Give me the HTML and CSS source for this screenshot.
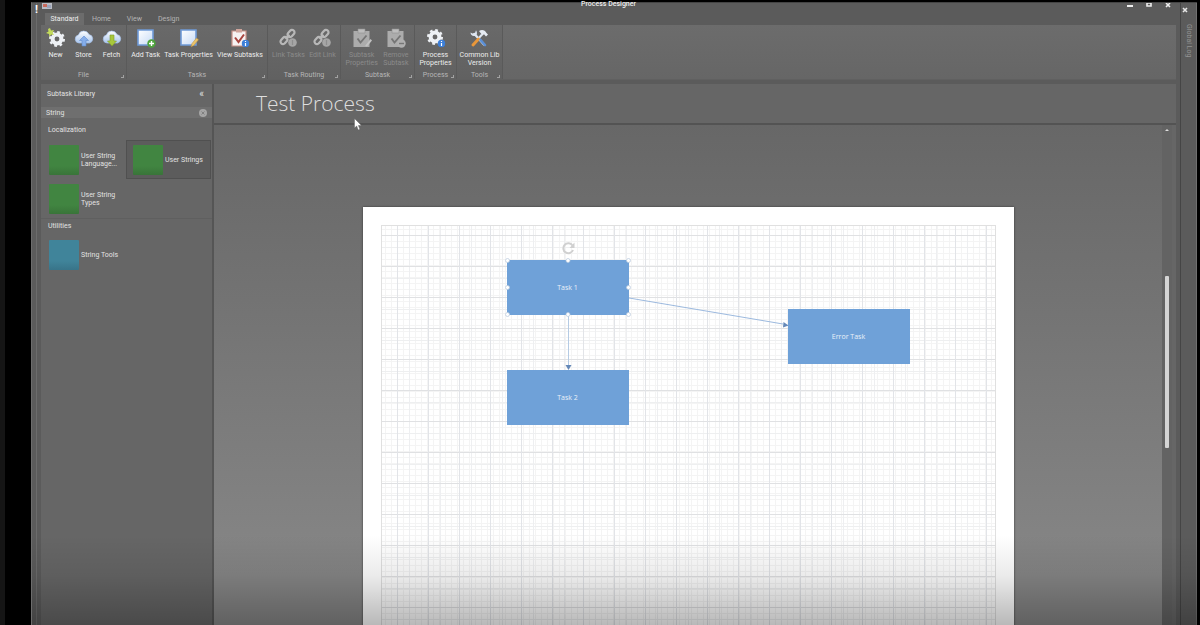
FILE: index.html
```html
<!DOCTYPE html>
<html lang="en">
<head>
<meta charset="utf-8">
<title>Process Designer</title>
<link rel="stylesheet" href="styles.css">
</head>
<body>
<svg class="defs" aria-hidden="true">
  <defs>
    <linearGradient id="cloudFill" x1="0" y1="0" x2="0" y2="1"><stop offset="0" stop-color="#ffffff"/><stop offset="1" stop-color="#a9c6ee"/></linearGradient>
    <linearGradient id="noteFill" x1="0" y1="0" x2="1" y2="1"><stop offset="0" stop-color="#ffffff"/><stop offset="1" stop-color="#c6daf6"/></linearGradient>
    <symbol id="gear" viewBox="0 0 20 20">
      <circle cx="10" cy="10" r="4.900" fill="none" stroke="#eef1f5" stroke-width="4.400"/>
      <circle cx="10" cy="10" r="7.600" fill="none" stroke="#eef1f5" stroke-width="2.600" stroke-dasharray="3 2.970"/>
    </symbol>
    <symbol id="cloud" viewBox="0 0 20 20">
      <path d="M5 15a4 4 0 0 1-.6-7.900A5.600 5.600 0 0 1 15 6.600a4.300 4.300 0 0 1 .5 8.400z" fill="url(#cloudFill)" stroke="#a5c0e8" stroke-width=".7"/>
    </symbol>
    <symbol id="note" viewBox="0 0 20 20">
      <path d="M2 2h15v15H2z" fill="url(#noteFill)" stroke="#6f9ad8" stroke-width="1.600"/>
    </symbol>
    <symbol id="info" viewBox="0 0 8 8">
      <circle cx="4" cy="4" r="3.800" fill="#3d7fd8"/><path d="M4 3.400v3M4 1.500v1" stroke="#fff" stroke-width="1.200"/>
    </symbol>
    <symbol id="chain" viewBox="0 0 20 20">
      <g fill="none" stroke="#b8b8b8" stroke-width="2.200">
        <rect x="-4" y="-2.500" width="8" height="5" rx="2.500" transform="translate(13 5.500) rotate(-48)"/>
        <rect x="-4" y="-2.500" width="8" height="5" rx="2.500" transform="translate(6 12.500) rotate(-48)"/>
        <path d="M7.500 11l4-4.200"/>
      </g>
      <circle cx="14.500" cy="14.500" r="4.300" fill="#a6a6a6"/><path d="M14.500 12v5" stroke="#8e8e8e" stroke-width="1.200"/>
    </symbol>
    <symbol id="board" viewBox="0 0 20 20">
      <path d="M1.500 3h16v16h-16z" fill="#acacac"/><path d="M6 1h7v4H6z" fill="#bdbdbd" stroke="#929292" stroke-width=".6"/>
      <path d="M5.500 10.500l3 4 6-7" fill="none" stroke="#757575" stroke-width="1.900"/>
    </symbol>
  </defs>
</svg>

<div class="window">
  <div class="main">
    <header class="titlebar">
      <svg class="app-icon" width="10" height="7" viewBox="0 0 10 7"><path d="M0 0h10v6H0z" fill="#b9bcc4"/><path d="M1 1h4v3H1z" fill="#c96a5c"/><path d="M5 2h4v3H5z" fill="#9aa4ba"/></svg>
      <h1 class="window-title">Process Designer</h1>
      <div class="window-buttons">
        <button aria-label="Minimize"><svg width="8" height="8" viewBox="0 0 8 8"><path d="M1 3h6" stroke="#eee" stroke-width="2"/></svg></button>
        <button aria-label="Maximize"><svg width="8" height="8" viewBox="0 0 8 8"><path d="M2 0h4v3H2z" fill="none" stroke="#eee" stroke-width="1.600"/></svg></button>
        <button aria-label="Close"><svg width="8" height="8" viewBox="0 0 8 8"><path d="M2 0l4 4M6 0L2 4" stroke="#eee" stroke-width="1.600"/></svg></button>
      </div>
    </header>

    <nav class="tabs">
      <button class="tab active">Standard</button>
      <button class="tab">Home</button>
      <button class="tab">View</button>
      <button class="tab">Design</button>
    </nav>

    <div class="ribbon">
      <section class="group file">
        <div class="tools">
          <button class="tool"><svg viewBox="0 0 20 20"><use href="#gear" x="2" y="2" width="18" height="18"/><path d="M4 0l1 2.500L8 2 6.500 4.500 8 7 5 6.500 3.500 9 3 6 0 5l2.500-1.500L2 1z" fill="#c4dc5a"/></svg>New</button>
          <button class="tool"><svg viewBox="0 0 20 20"><use href="#cloud" width="20" height="20"/><path d="M10 8l4.500 4.500H12V18H8v-5.500H5.500z" fill="#86aeea" stroke="#5c8ad0" stroke-width=".6"/></svg>Store</button>
          <button class="tool"><svg viewBox="0 0 20 20"><use href="#cloud" width="20" height="20"/><path d="M10 18l4.500-5H12V7H8v6H5.500z" fill="#a8c83c" stroke="#7f9f28" stroke-width=".6"/></svg>Fetch</button>
        </div>
        <h2>File</h2>
      </section>
      <section class="group tasks">
        <div class="tools">
          <button class="tool"><svg viewBox="0 0 20 20"><use href="#note" width="20" height="20"/><circle cx="15.500" cy="15.500" r="4.200" fill="#4ea43c"/><path d="M15.500 13v5M13 15.500h5" stroke="#fff" stroke-width="1.400"/></svg>Add Task</button>
          <button class="tool"><svg viewBox="0 0 20 20"><use href="#note" width="20" height="20"/><path d="M12 19l1-3.500L17.500 10l2 1.700-4.500 5.500z" fill="#e9c46c" stroke="#b88a3a" stroke-width=".5"/></svg>Task Properties</button>
          <button class="tool"><svg viewBox="0 0 20 20"><path d="M2 3h14v15H2z" fill="#f6f2f2" stroke="#c99288" stroke-width="1.200"/><path d="M6 1h6v3.500H6z" fill="#d0a59c"/><path d="M5 9.500l3.500 4.500L14 6.500" fill="none" stroke="#a8443e" stroke-width="2"/><use href="#info" x="11.500" y="11.500" width="8" height="8"/></svg>View Subtasks</button>
        </div>
        <h2>Tasks</h2>
      </section>
      <section class="group routing">
        <div class="tools">
          <button class="tool" disabled><svg viewBox="0 0 20 20"><use href="#chain" width="20" height="20"/></svg>Link Tasks</button>
          <button class="tool" disabled><svg viewBox="0 0 20 20"><use href="#chain" width="20" height="20"/></svg>Edit Link</button>
        </div>
        <h2>Task Routing</h2>
      </section>
      <section class="group subtask">
        <div class="tools">
          <button class="tool" disabled><svg viewBox="0 0 20 20"><use href="#board" width="20" height="20"/><path d="M13 18l5.500-7 1.500 1.500-5 6z" fill="#c2c2c2"/></svg>Subtask<br>Properties</button>
          <button class="tool" disabled><svg viewBox="0 0 20 20"><use href="#board" width="20" height="20"/><circle cx="15.500" cy="15.500" r="4.200" fill="#b0b0b0"/><path d="M13 15.500h5" stroke="#777" stroke-width="1.400"/></svg>Remove<br>Subtask</button>
        </div>
        <h2>Subtask</h2>
      </section>
      <section class="group process">
        <div class="tools">
          <button class="tool"><svg viewBox="0 0 20 20"><use href="#gear" width="18" height="18"/><use href="#info" x="11.500" y="11.500" width="8" height="8"/></svg>Process<br>Properties</button>
        </div>
        <h2>Process</h2>
      </section>
      <section class="group misc">
        <div class="tools">
          <button class="tool"><svg viewBox="0 0 20 20"><path d="M5.500 6l9.500 10.500" stroke="#dfe7f2" stroke-width="2.400" stroke-linecap="round"/><path d="M13 6.500L9 11" stroke="#dfe7f2" stroke-width="2"/><path d="M9.500 11L4 17" stroke="#e8973a" stroke-width="3" stroke-linecap="round"/><path d="M11.500 12l4.500 5" stroke="#5b8fd6" stroke-width="2.600" stroke-linecap="round"/><path d="M1.500 4.500c0 3 2.500 4 5 3.200 2-1.200 1.800-3.700.5-5.500L6 5 3.500 5.500z" fill="#dfe7f2"/><path d="M10 3c3-2 6-1 7.500 2l1.500 1.500-2 2-2-2.300-1.500 1.300z" fill="#e6ebf3"/></svg>Common Lib<br>Version</button>
        </div>
        <h2>Tools</h2>
      </section>
    </div>

    <div class="workspace">
      <aside class="library">
        <div class="library-head"><h2>Subtask Library</h2><button aria-label="Collapse">«</button></div>
        <div class="search">
          <input type="text" value="String" aria-label="Search subtasks">
          <button aria-label="Clear"><svg width="8" height="8" viewBox="0 0 8 8"><circle cx="4" cy="4" r="4" fill="#a6a6a6"/><path d="M2.500 2.500l3 3M5.500 2.500l-3 3" stroke="#808080"/></svg></button>
        </div>
        <h3>Localization</h3>
        <div class="items">
          <button class="item"><span class="swatch green"></span><span>User String<br>Language...</span></button>
          <button class="item selected"><span class="swatch green"></span><span>User Strings</span></button>
          <button class="item"><span class="swatch green"></span><span>User String<br>Types</span></button>
        </div>
        <h3 class="ruled">Utilities</h3>
        <div class="items">
          <button class="item"><span class="swatch teal"></span><span>String Tools</span></button>
        </div>
      </aside>

      <section class="designer">
        <div class="designer-head"><h2>Test Process</h2>
          <svg class="cursor" width="8" height="13" viewBox="0 0 8 13"><path d="M.5.500v9.500l2.200-2 1.500 4 1.700-.7-1.500-3.800H7.500z" fill="#fff" stroke="#555" stroke-width=".4"/></svg>
        </div>
        <div class="canvas">
          <div class="stage">
            <div class="sheet">
              <div class="paper">
                <svg class="links" width="615" height="400" viewBox="0 0 615 400">
                  <path d="M187.500 90v50" stroke="#b5cbe4" fill="none"/>
                  <path d="M184.500 140h6l-3 5z" fill="#6488b8"/>
                  <path d="M248 73l154 26" stroke="#9cb9de" fill="none"/>
                  <path d="M402.500 97l5 3.500-5.500 2z" fill="#6488b8"/>
                </svg>
                <div class="node task1">Task 1
                  <svg class="handles" width="128" height="78" viewBox="0 0 128 78">
                    <path d="M68.500 6.500a5 5 0 1 0 .5 4.500" transform="translate(0 -1)" fill="none" stroke="#d0d0d0" stroke-width="2"/><path d="M70.500 2.500v5.500h-5z" fill="#d0d0d0"/>
                    <g fill="#fff" stroke="#b8c9dd" stroke-width=".7"><circle cx="3.500" cy="20.500" r="2"/><circle cx="64" cy="20.500" r="2"/><circle cx="124.500" cy="20.500" r="2"/><circle cx="3.500" cy="47.500" r="2"/><circle cx="124.500" cy="47.500" r="2"/><circle cx="3.500" cy="74.500" r="2"/><circle cx="64" cy="74.500" r="2"/><circle cx="124.500" cy="74.500" r="2"/></g>
                  </svg>
                </div>
                <div class="node task2">Task 2</div>
                <div class="node error">Error Task</div>
              </div>
            </div>
          </div>
          <div class="scroll"><span class="up"></span><span class="thumb"></span></div>
        </div>
      </section>
    </div>
  </div>

  <div class="rail">
    <button class="rail-close" aria-label="Close panel"><svg width="8" height="8" viewBox="0 0 8 8"><path d="M2 2l4 4M6 2L2 6" stroke="#e6e6e6" stroke-width="1.600"/></svg></button>
    <button class="rail-tab">Global Log</button>
  </div>
  <span class="mark">!</span>
  <div class="shade"></div>
</div>
</body>
</html>
```

FILE: styles.css
```css
* { box-sizing: border-box; }
body {
  margin: 0;
  height: 100vh;
  display: flex;
  overflow: hidden;
  background: #000;
  border-left: 5px solid #151515;
  padding: 2px 3px 0 26px;
  color: #e2e2e2;
  font: 7px/8px Roboto, "Open Sans", sans-serif;
}
h1, h2, h3 { margin: 0; font: inherit; }
button, input {
  margin: 0;
  padding: 0;
  border: 0;
  background: none;
  color: inherit;
  font: inherit;
}
svg { display: block; }
.defs { position: absolute; width: 0; height: 0; }

.window {
  position: relative;
  flex: 1;
  display: flex;
  background: #5b5b5b;
  border-left: 1px solid #6c6c6c;
  border-top: 1px solid #444;
}
.main {
  flex: 1;
  min-width: 0;
  display: flex;
  flex-direction: column;
  margin-left: 4px;
  padding: 0 4px;
  border-left: 1px solid #6c6c6c;
  border-right: 1px solid #454545;
}

.titlebar {
  display: grid;
  grid-template-columns: 1fr auto 1fr;
  height: 10px;
}
.app-icon { margin-left: 1px; }
.window-title { line-height: 3px; color: #f0f0f0; font-weight: 500; }
.window-buttons { display: flex; align-items: flex-start; justify-content: flex-end; gap: 11px; padding-right: 4px; }

.tabs { display: flex; padding-left: 4px; }
.tab { height: 12px; padding: 0 8px; color: #b4b4b4; }
.tab.active { width: 39px; padding: 0; background: #6c6c6c; color: #ededed; }

.ribbon {
  display: flex;
  height: 55px;
  background: linear-gradient(#6c6c6c, #666);
  border-bottom: 1px solid #606060;
}
.group {
  position: relative;
  display: flex;
  flex-direction: column;
  justify-content: space-between;
  padding-top: 3px;
  border-right: 1px solid #5a5a5a;
  background: linear-gradient(#696969, #616161);
}
.group h2 { text-align: center; color: #b6b6b6; }
.group::after {
  content: "";
  position: absolute;
  right: 2px;
  bottom: 1px;
  border: 1px solid #a2a2a2;
  border-width: 0 1px 1px 0;
  width: 2px;
  height: 2px;
}
.file { width: 86px; }
.tasks { width: 141px; }
.routing { width: 73px; }
.subtask { width: 74px; }
.process { width: 42px; }
.misc { width: 46px; }
.tools { display: flex; justify-content: space-evenly; }
.tool {
  min-width: 27px;
  white-space: nowrap;
  color: #ededed;
  text-align: center;
}
.tool svg { width: 20px; height: 20px; margin: 0 auto 3px; }
.tool:disabled { color: #8b8b8b; }

.workspace { flex: 1; min-height: 0; display: flex; margin-top: 4px; }
.library {
  width: 173px;
  flex-shrink: 0;
  background: #666;
  border-right: 2px solid #555;
}
.library-head {
  display: flex;
  justify-content: space-between;
  align-items: center;
  height: 19px;
  padding: 0 8px 0 6px;
}
.library-head button { font-size: 10px; }
.search {
  display: flex;
  align-items: center;
  height: 11px;
  margin: 4px 0 7px;
  padding: 0 5px;
  background: #6f6f6f;
}
.search input { flex: 1; min-width: 0; height: 11px; outline: 0; }
.library h3 { height: 15px; padding-left: 7px; line-height: 11px; }
.library .ruled { height: 17px; border-top: 1px solid #5f5f5f; line-height: 15px; }
.items { display: grid; grid-template-columns: 1fr 1fr; grid-auto-rows: 39px; padding-right: 1px; }
.item {
  display: flex;
  align-items: center;
  gap: 2px;
  padding-left: 7px;
  border: 1px solid transparent;
  text-align: left;
  white-space: nowrap;
}
.item.selected { background: #5c5c5c; border-color: #505050; padding-left: 6px; }
.swatch { width: 30px; height: 30px; border-radius: 1px; }
.green { background: linear-gradient(#418541 70%, #397439); }
.teal { background: linear-gradient(#40849a 70%, #387489); }

.designer { flex: 1; min-width: 0; display: flex; flex-direction: column; background: #666; }
.designer-head {
  position: relative;
  height: 41px;
  padding-left: 42px;
  border-bottom: 2px solid #535353;
}
.designer-head h2 {
  font: 300 21px/39px "Open Sans", "Noto Sans", sans-serif;
  color: #dedede;
}
.cursor { position: absolute; left: 140px; top: 34px; }
.canvas { flex: 1; min-height: 0; display: flex; margin-right: 4px; }
.stage {
  flex: 1;
  min-width: 0;
  overflow: hidden;
  display: flex;
  justify-content: center;
  padding-top: 82px;
  background: linear-gradient(#676767, #868686 90%);
}
.sheet {
  flex: 0 0 651px;
  height: 900px;
  padding: 18px;
  background: #fff;
  box-shadow: 0 0 2px #333;
}
.paper {
  position: relative;
  height: 100%;
  border: 1px solid #e0e0e0;
  background:
    linear-gradient(90deg, #e2e4e8 1px, transparent 1px) 15px 0 / 31px 31px,
    linear-gradient(#e0e1e3 1px, transparent 1px) 0 9px / 31px 31px,
    linear-gradient(90deg, #eeeff1 1px, transparent 1px) 27px 0 / 31px 31px,
    linear-gradient(#eeeff0 1px, transparent 1px) 0 21px / 31px 31px,
    linear-gradient(90deg, #f4f4f4 1px, transparent 1px) 3px 0 / 6px 6px,
    linear-gradient(#f4f4f4 1px, transparent 1px) 0 3px / 6px 6px,
    #fff;
}
.links { position: absolute; left: -1px; top: -1px; }
.node {
  position: absolute;
  width: 122px;
  height: 55px;
  background: #6fa1d8;
  color: #eaf1f9;
  font: 7px/55px "Open Sans", "Noto Sans", sans-serif;
  text-align: center;
}
.task1 { left: 125px; top: 34px; }
.task2 { left: 125px; top: 144px; }
.error { left: 406px; top: 83px; }
.handles { position: absolute; left: -3px; top: -20px; }

.scroll { width: 10px; background: #636363; display: flex; flex-direction: column; align-items: center; }
.up { margin: 4px 0 145px; border: 2px solid transparent; border-top: 0; border-bottom-color: #ddd; }
.thumb { width: 4px; height: 172px; border-radius: 1px; background: #d4d4d4; }

.rail { width: 16px; display: flex; flex-direction: column; align-items: center; padding-top: 3px; border-right: 1px solid #707070; }
.rail-close { align-self: flex-start; }
.rail-tab { margin-top: 10px; writing-mode: vertical-rl; color: #929292; }
.mark { position: absolute; left: 3px; top: 1px; font-weight: 700; font-size: 11px; line-height: 12px; color: #fff; }
.shade {
  position: absolute;
  left: 0;
  right: 0;
  bottom: 0;
  height: 90px;
  pointer-events: none;
  background: linear-gradient(transparent, rgba(0, 0, 0, .08) 45%, rgba(0, 0, 0, .28));
}
```
